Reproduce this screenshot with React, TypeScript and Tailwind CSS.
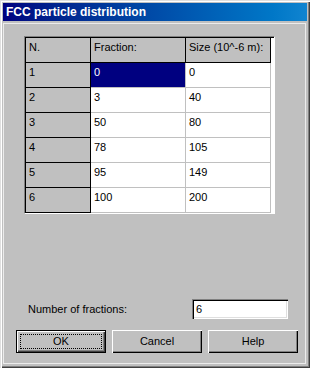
import React from "react";

const rows = [
  { n: "1", fraction: "0", size: "0" },
  { n: "2", fraction: "3", size: "40" },
  { n: "3", fraction: "50", size: "80" },
  { n: "4", fraction: "78", size: "105" },
  { n: "5", fraction: "95", size: "149" },
  { n: "6", fraction: "100", size: "200" },
];

const grayCell =
  "h-[25px] bg-[#c0c0c0] border-r border-b border-black pl-[3px] pt-[3px] leading-[13px]";
const whiteCell =
  "h-[25px] bg-white border-r border-b border-[#c0c0c0] pl-[3px] pt-[3px] leading-[13px]";

const Button = ({ label, isDefault }: { label: string; isDefault?: boolean }) => (
  <button
    className={
      "w-[90px] h-[23px] bg-[#c0c0c0] text-black text-[11px] relative " +
      (isDefault
        ? "border border-black shadow-[inset_1px_1px_0_#fff,inset_-1px_-1px_0_#404040,inset_-2px_-2px_0_#808080]"
        : "shadow-[inset_1px_1px_0_#fff,inset_-1px_-1px_0_#000,inset_-2px_-2px_0_#808080]")
    }
  >
    {isDefault && (
      <span className="absolute left-[3px] top-[3px] right-[3px] bottom-[3px] border border-dotted border-black" />
    )}
    <span className="relative">{label}</span>
  </button>
);

export default function App() {
  return (
    <div
      className="w-[310px] h-[368px] bg-[#c0c0c0] p-[3px] flex flex-col text-black text-[11px] shadow-[inset_1px_1px_0_#dfdfdf,inset_2px_2px_0_#fff,inset_-1px_-1px_0_#404040,inset_-2px_-2px_0_#808080]"
      style={{ fontFamily: '"Liberation Sans", Arial, sans-serif' }}
    >
      {/* title bar */}
      <div className="h-[18px] bg-linear-to-r from-[#000080] to-[#1084d0] flex items-center pl-[3px]">
        <span className="text-white font-bold text-[12px] leading-none">FCC particle distribution</span>
      </div>

      <div className="flex-1 mt-[2px] mr-[1px] mb-[1px] border border-[#ececec] flex flex-col">
        {/* grid */}
        <div className="ml-[20px] mt-[12px] w-[251px] border border-t-[#808080] border-l-[#808080] border-r-white border-b-white">
          <div className="bg-white border-t border-l border-black grid grid-cols-[65px_95px_85px]">
            <div className={grayCell}>N.</div>
            <div className={grayCell}>Fraction:</div>
            <div className={grayCell}>Size (10^-6 m):</div>
            {rows.map((r, i) => (
              <React.Fragment key={r.n}>
                <div className={grayCell}>{r.n}</div>
                <div
                  className={
                    i === 0
                      ? "h-[25px] bg-[#000080] text-white border-r border-b border-[#c0c0c0] pl-[3px] pt-[3px] leading-[13px]"
                      : whiteCell
                  }
                >
                  {r.fraction}
                </div>
                <div className={whiteCell}>{r.size}</div>
              </React.Fragment>
            ))}
          </div>
        </div>

        {/* number of fractions */}
        <div className="mt-[85px] h-[20px] flex items-center pl-[24px] pr-[17px]">
          <span>Number of fractions:</span>
          <div className="ml-auto w-[96px] h-[20px] bg-white flex items-center pl-[4px] shadow-[inset_1px_1px_0_#808080,inset_2px_2px_0_#000,inset_-1px_-1px_0_#fff,inset_-2px_-2px_0_#dfdfdf]">
            6
          </div>
        </div>

        {/* buttons */}
        <div className="mt-[11px] flex gap-[6px] pl-[12px]">
          <Button label="OK" isDefault />
          <Button label="Cancel" />
          <Button label="Help" />
        </div>
      </div>
    </div>
  );
}
